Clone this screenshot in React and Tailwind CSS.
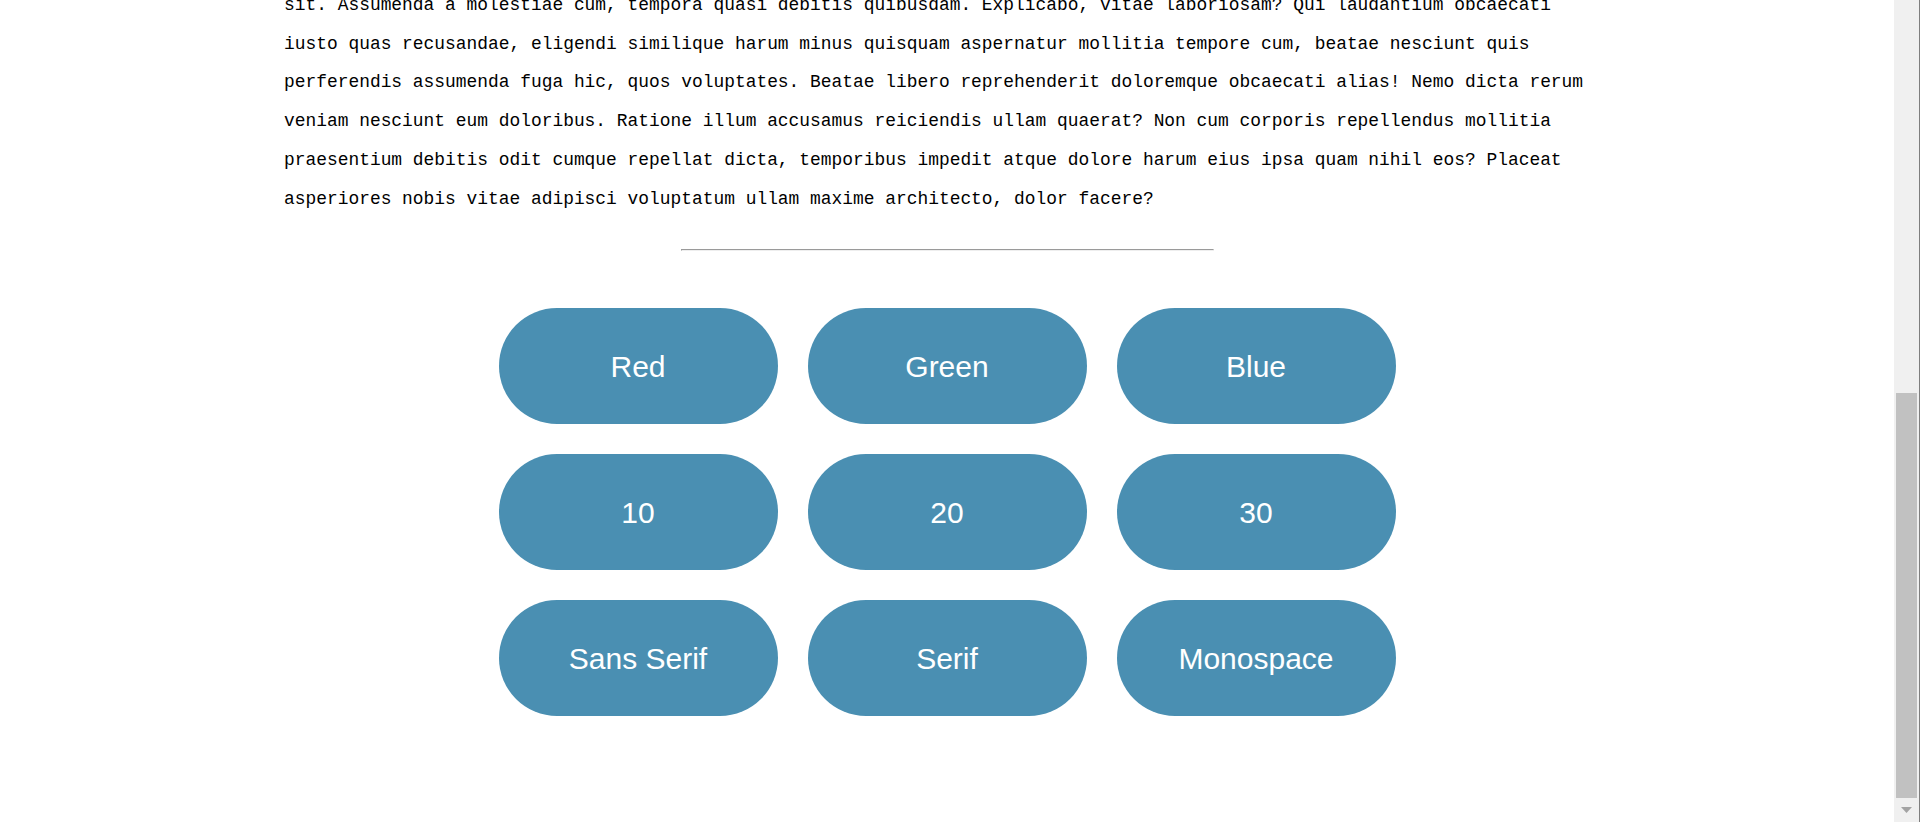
const text =
  'sit. Assumenda a molestiae cum, tempora quasi debitis quibusdam. Explicabo, vitae laboriosam? Qui laudantium obcaecati iusto quas recusandae, eligendi similique harum minus quisquam aspernatur mollitia tempore cum, beatae nesciunt quis perferendis assumenda fuga hic, quos voluptates. Beatae libero reprehenderit doloremque obcaecati alias! Nemo dicta rerum veniam nesciunt eum doloribus. Ratione illum accusamus reiciendis ullam quaerat? Non cum corporis repellendus mollitia praesentium debitis odit cumque repellat dicta, temporibus impedit atque dolore harum eius ipsa quam nihil eos? Placeat asperiores nobis vitae adipisci voluptatum ullam maxime architecto, dolor facere?'

const buttons = ['Red', 'Green', 'Blue', '10', '20', '30', 'Sans Serif', 'Serif', 'Monospace']

const Scrollbar = () => {
  return (
    <div className="flex h-full w-[26px] flex-none">
      <div className="flex h-full w-[25px] flex-col bg-[#f0f0f0] px-[2px]">
        <div className="flex-1" />
        <div className="h-[405px] w-full bg-[#c1c1c1]" />
        <div className="flex h-[24px] items-center justify-center">
          <svg width="11" height="6" viewBox="0 0 11 6">
            <path d="M0 0 L11 0 L5.5 6 Z" fill="#a3a3a3" />
          </svg>
        </div>
      </div>
      <div className="h-full w-px bg-[#7f7f7f]" />
    </div>
  )
}

export default function App() {
  return (
    <div className="flex h-[822px] w-full overflow-hidden bg-white">
      <main className="flex min-w-0 flex-1 flex-col items-center">
        <p className="mt-[-14px] w-[1326px] font-['Liberation_Mono',monospace] text-[17.9px] leading-[38.7px] text-black">
          {text}
        </p>
        <div className="mt-[31px] h-0 w-[533px] border-t border-r border-b border-l border-t-[#9a9a9a] border-l-[#9a9a9a] border-r-[#eeeeee] border-b-[#eeeeee]" />
        <div className="mt-[57px] grid grid-cols-[repeat(3,279px)] gap-x-[30px] gap-y-[30px]">
          {buttons.map((label) => (
            <button
              key={label}
              type="button"
              className="flex h-[116px] items-center justify-center rounded-full bg-[#4a8fb2] font-['Liberation_Sans',Arial,sans-serif] text-[30px] text-white"
            >
              {label}
            </button>
          ))}
        </div>
      </main>
      <Scrollbar />
    </div>
  )
}
